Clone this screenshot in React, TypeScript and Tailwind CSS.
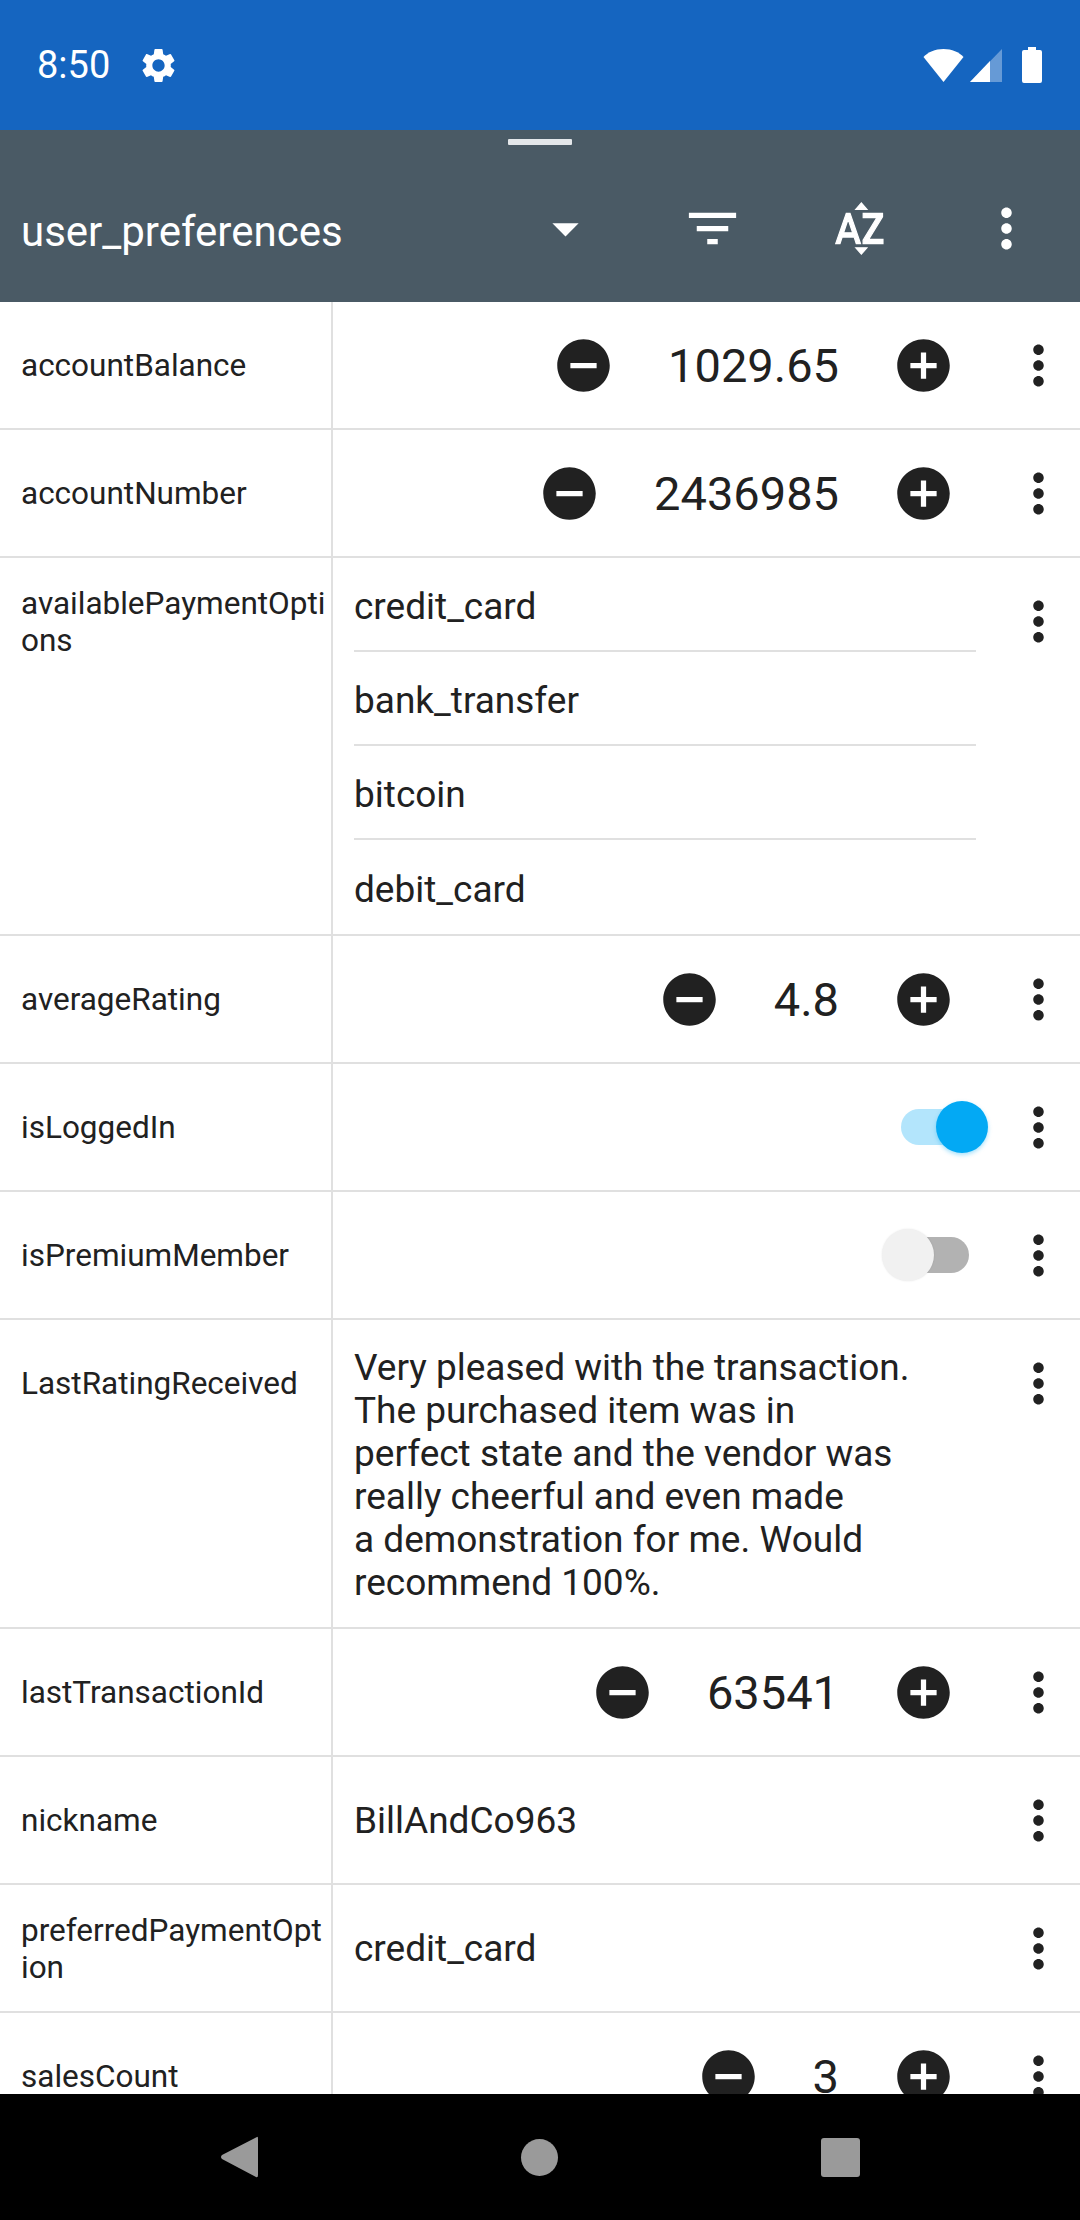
import { MdAddCircle, MdArrowDropDown, MdFilterList, MdMoreVert, MdRemoveCircle, MdSettings } from "react-icons/md";

function RowMenu() {
  return (
    <div className="flex h-[126px] w-[63px] shrink-0 items-center justify-center text-[#212121]">
      <MdMoreVert size={63} />
    </div>
  );
}

function Stepper({ value }: { value: string }) {
  return (
    <div className="flex h-[126px] flex-1 items-center justify-end pr-[52px] text-[#212121]">
      <MdRemoveCircle size={63} />
      <span className="mx-[53px] text-[47px] leading-none">{value}</span>
      <MdAddCircle size={63} />
    </div>
  );
}

function Toggle({ on }: { on: boolean }) {
  return (
    <div className="flex h-[126px] flex-1 items-center justify-end">
      {on ? (
        <div className="relative mr-[28px] h-[36px] w-[78px] rounded-full bg-[#b3e5fc]">
          <div className="absolute top-[-8px] right-[-9px] size-[52px] rounded-full bg-[#03a9f4] shadow-[0_2px_4px_rgba(3,169,244,0.35)]" />
        </div>
      ) : (
        <div className="relative mr-[38px] h-[36px] w-[78px] rounded-full bg-[#b2b2b2]">
          <div className="absolute top-[-8px] left-[-9px] size-[52px] rounded-full bg-[#f1f1f1] shadow-[0_0_2px_rgba(0,0,0,0.1)]" />
        </div>
      )}
    </div>
  );
}

function TextValue({ value }: { value: string }) {
  return <div className="flex h-[126px] flex-1 items-center pl-[21px] pt-[1px] text-[37px] text-[#212121]">{value}</div>;
}

function Row({ label, children }: { label: string; children: React.ReactNode }) {
  return (
    <div className="flex border-b-2 border-[#e0e0e0]">
      <div className="flex w-[333px] shrink-0 border-r-2 border-[#e0e0e0] pl-[21px] pr-[4.5px]">
        <div className="flex h-[126px] items-center pt-[1px]">
          <span className="text-[31.5px] leading-[37px] break-all text-[#212121]">{label}</span>
        </div>
      </div>
      <div className="flex flex-1 pr-[10px]">
        {children}
        <RowMenu />
      </div>
    </div>
  );
}

const paymentOptions = ["credit_card", "bank_transfer", "bitcoin", "debit_card"];

const ratingLines = [
  "Very pleased with the transaction.",
  "The purchased item was in",
  "perfect state and the vendor was",
  "really cheerful and even made",
  "a demonstration for me. Would",
  "recommend 100%.",
];

export default function App() {
  return (
    <div className="flex h-[2220px] w-[1080px] flex-col overflow-hidden bg-white font-['Roboto',sans-serif]">
      {/* status bar */}
      <div className="flex h-[130px] shrink-0 items-center bg-[#1565c0] pl-[37px] pr-[38px] text-white">
        <span className="text-[38px] leading-none">8:50</span>
        <MdSettings size={41} className="ml-[28px]" />
        <div className="ml-auto flex items-center">
          <svg width="41" height="33" viewBox="0 0 41 33" fill="white">
            <path d="M20.5 33 L0.5 8 C5 3 12 0 20.5 0 C29 0 36 3 40.5 8 Z" />
          </svg>
          <svg width="32" height="33" viewBox="0 0 32 33" className="ml-[6px]">
            <path d="M32 0 V33 H0 Z" fill="white" fillOpacity="0.35" />
            <path d="M20 12 V33 H0 Z" fill="white" />
          </svg>
          <svg width="20" height="36" viewBox="0 0 20 36" fill="white" className="ml-[20px]">
            <path d="M6 0 H14 V3 H18 Q20 3 20 5 V34 Q20 36 18 36 H2 Q0 36 0 34 V5 Q0 3 2 3 H6 Z" />
          </svg>
        </div>
      </div>

      {/* toolbar */}
      <div className="flex h-[172px] shrink-0 flex-col bg-[#4a5a65] text-white">
        <div className="mx-auto mt-[9px] h-[6px] w-[64px] rounded-[1px] bg-[#e4e7ea]" />
        <div className="mt-[52px] flex items-center pl-[21px] pr-[42px]">
          <span className="flex-1 pt-[6px] text-[42px] leading-none">user_preferences</span>
          <div className="flex items-center gap-[84px]">
            <MdArrowDropDown size={63} />
            <MdFilterList size={63} />
            <svg width="56" height="63" viewBox="0 0 24 24" preserveAspectRatio="none" fill="white" stroke="white" strokeWidth="0.5" className="mx-[3.5px]">
              <path d="M14.94 4.66h-4.72l2.36-2.36zm-4.69 14.71h4.66l-2.33 2.33zM6.1 6.27L1.6 17.73h1.84l.92-2.45h5.11l.92 2.45h1.84L7.74 6.27H6.1zm-1.13 7.37l1.94-5.18 1.94 5.18H4.97zm10.76 2.5h6.12v1.59h-8.53v-1.29l5.92-8.56h-5.88v-1.6h8.3v1.26l-5.93 8.6z" />
            </svg>
            <MdMoreVert size={63} />
          </div>
        </div>
      </div>

      {/* preference rows */}
      <div className="flex-1 overflow-hidden">
        <Row label="accountBalance">
          <Stepper value="1029.65" />
        </Row>
        <Row label="accountNumber">
          <Stepper value="2436985" />
        </Row>
        <Row label="availablePaymentOptions">
          <div className="flex-1 pl-[21px] pr-[31px]">
            {paymentOptions.map((option, i) => (
              <div key={option} className={`flex h-[94px] items-center pt-[5px] text-[37px] text-[#212121] ${i < 3 ? "border-b-2 border-[#e0e0e0]" : ""}`}>
                {option}
              </div>
            ))}
          </div>
        </Row>
        <Row label="averageRating">
          <Stepper value="4.8" />
        </Row>
        <Row label="isLoggedIn">
          <Toggle on />
        </Row>
        <Row label="isPremiumMember">
          <Toggle on={false} />
        </Row>
        <Row label="LastRatingReceived">
          <div className="flex-1 pb-[23px] pl-[21px] pt-[26px] text-[37px] leading-[43px] text-[#212121]">
            {ratingLines.map((line) => (
              <div key={line}>{line}</div>
            ))}
          </div>
        </Row>
        <Row label="lastTransactionId">
          <Stepper value="63541" />
        </Row>
        <Row label="nickname">
          <TextValue value="BillAndCo963" />
        </Row>
        <Row label="preferredPaymentOption">
          <TextValue value="credit_card" />
        </Row>
        <Row label="salesCount">
          <Stepper value="3" />
        </Row>
      </div>

      {/* nav bar */}
      <div className="flex h-[126px] shrink-0 items-center justify-center gap-[263px] bg-black">
        <svg width="37" height="42" viewBox="0 0 37 42" fill="#9a9a9a">
          <path d="M36 1 Q37 0 37 3 V39 Q37 42 35 41 L1 23 Q-1 21 1 19 Z" />
        </svg>
        <div className="size-[37px] rounded-full bg-[#9a9a9a]" />
        <div className="size-[39px] rounded-[3px] bg-[#9a9a9a]" />
      </div>
    </div>
  );
}
